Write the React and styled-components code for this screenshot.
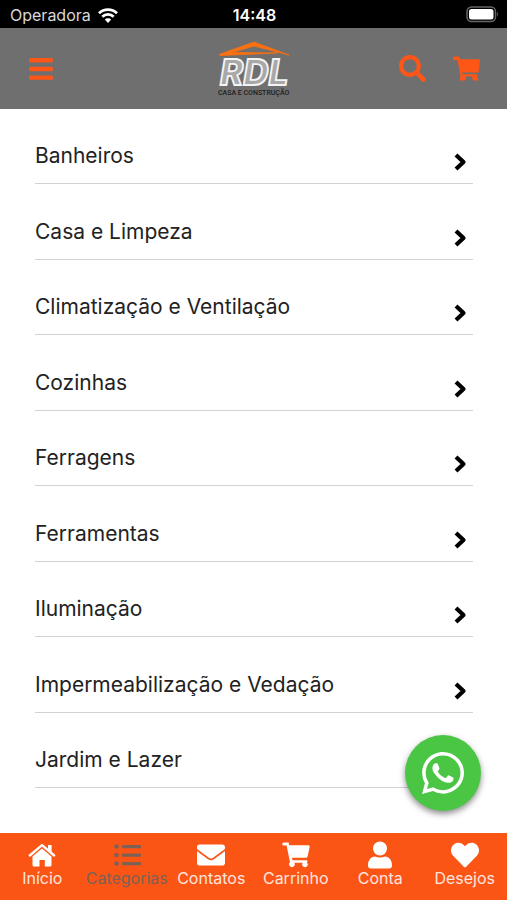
import React from 'react';
import styled, { createGlobalStyle } from 'styled-components';
import { FaEnvelope, FaHeart, FaSearch, FaWhatsapp } from 'react-icons/fa';

const GlobalStyle = createGlobalStyle`
    * {
        box-sizing: border-box;
    }

    body {
        margin: 0;
        background: #fff;
        font-family: Inter, "Liberation Sans", sans-serif;
    }
`

const Screen = styled.div`
    display: flex;
    flex-direction: column;
    height: 100vh;
`

const StatusBar = styled.div`
    display: grid;
    grid-template-columns: 1fr auto 1fr;
    align-items: center;
    flex: none;
    height: 28px;
    padding: 2px 8px 0 10px;
    background: #000;
    color: #fff;
    font-size: 16px;
    line-height: 20px;
`

const Carrier = styled.div`
    display: flex;
    align-items: center;
    gap: 7px;
    color: #d8d8d8;
`

const Clock = styled.div`
    font-weight: 600;
`

const Battery = styled.svg`
    justify-self: end;
    width: 34px;
    height: 18px;
`

const Header = styled.header`
    display: grid;
    grid-template-columns: 1fr auto 1fr;
    align-items: center;
    flex: none;
    height: 81px;
    padding: 0 25px;
    background: #6f6f6f;
`

const HeaderActions = styled.div`
    display: flex;
    justify-content: flex-end;
    gap: 22px;
`

const IconButton = styled.button`
    display: flex;
    align-items: center;
    justify-content: center;
    width: 32px;
    height: 32px;
    padding: 0;
    border: none;
    background: transparent;
    color: #fe5617;
    font-size: 27px;
    cursor: pointer;
`

const Logo = styled.a`
    display: block;
    height: 60px;
`

const CategoryList = styled.ul`
    display: flex;
    flex-direction: column;
    flex: 1;
    min-height: 0;
    margin: 0;
    padding: 0 34px 45px 35px;
    list-style: none;
    overflow-y: auto;
`

const CategoryItem = styled.li`
    display: flex;
    flex: 1 0 60px;
    border-bottom: 1px solid #d2d2d2;
`

const CategoryLink = styled.a`
    display: flex;
    align-items: flex-end;
    justify-content: space-between;
    flex: 1;
    padding: 0 6px 12px 0;
    color: #222;
    font-size: 21px;
    line-height: 30px;
    text-decoration: none;
`

const WhatsappButton = styled.a`
    position: fixed;
    right: 26px;
    bottom: 89px;
    display: flex;
    align-items: center;
    justify-content: center;
    width: 76px;
    height: 76px;
    border-radius: 50%;
    background: #4ac544;
    box-shadow: 0 3px 6px rgba(0, 0, 0, 0.45);
    color: #fff;
    font-size: 48px;
`

const TabBar = styled.nav`
    display: grid;
    grid-template-columns: repeat(6, 1fr);
    flex: none;
    height: 67px;
    padding-top: 8px;
    background: #fb5516;
`

const Tab = styled.a`
    display: flex;
    flex-direction: column;
    align-items: center;
    color: ${props => props.$active ? '#7b6255' : '#fff'};
    font-size: 16px;
    line-height: 18px;
    text-decoration: none;
    white-space: nowrap;

    svg {
        width: 28px;
        height: 28px;
    }
`

const TabLabel = styled.span`
    opacity: ${props => props.$active ? 1 : 0.85};
`

function WifiIcon() {
    return (
        <svg width="20" height="15" viewBox="0 0 20 15" fill="none" stroke="#fff" strokeWidth="2.8">
            <path d="M1 5.3a12.8 12.8 0 0 1 18 0" />
            <path d="M4.3 8.8a8.1 8.1 0 0 1 11.4 0" />
            <path d="M10 15 6.8 11.6a4.5 4.5 0 0 1 6.4 0z" fill="#fff" stroke="none" />
        </svg>
    );
}

function MenuIcon() {
    return (
        <svg width="24" height="22" viewBox="0 0 24 22" fill="currentColor">
            <rect width="24" height="4.4" rx="1.6" />
            <rect y="8.8" width="24" height="4.4" rx="1.6" />
            <rect y="17.4" width="24" height="4.4" rx="1.6" />
        </svg>
    );
}

function ChevronIcon() {
    return (
        <svg width="13" height="18" viewBox="0 0 13 18" fill="none" stroke="#000" strokeWidth="4.2" strokeLinejoin="round">
            <path d="M2 2 9.5 9 2 16" />
        </svg>
    );
}

function BasketIcon() {
    return (
        <svg width="27" height="25" viewBox="0 0 27 25" fill="currentColor">
            <path d="M0 1.5Q0 .5 1 .5H6l1 2.7H27L25.500 16.500H9.300V18.300H24V20L25.500 24.500H20L18.800 20.500H13.200L12 24.500H6.800L7.500 20 4.500 4H1Q0 4 0 3z" />
        </svg>
    );
}

function HomeIcon() {
    return (
        <svg viewBox="0 0 28 28" fill="currentColor">
            <path d="M14 7.6 23.5 15.5V24a1.500 1.500 0 0 1-1.500 1.500H16.800V19H11.500V25.500H6A1.500 1.500 0 0 1 4.500 24V15.500z" />
            <path d="M1.800 14.500 14 4.200 26.200 14.500" fill="none" stroke="currentColor" strokeWidth="2.4" strokeLinecap="round" strokeLinejoin="round" />
            <path d="M20 4h3.600v8L20 9z" />
        </svg>
    );
}

function ListIcon() {
    return (
        <svg viewBox="0 0 28 28" fill="currentColor">
            <circle cx="3.5" cy="5.5" r="2.3" />
            <circle cx="3.5" cy="14" r="2.3" />
            <circle cx="3.5" cy="22.5" r="2.3" />
            <rect x="9" y="4" width="19" height="3.2" rx="1" />
            <rect x="9" y="12.5" width="19" height="3.2" rx="1" />
            <rect x="9" y="21" width="19" height="3.2" rx="1" />
        </svg>
    );
}

function CartIcon() {
    return (
        <svg viewBox="0 0 28 28" fill="currentColor">
            <path d="M1.5 1.5H6.5L7.2 4.300H26.500Q28 4.300 27.700 5.800L25.600 15.500Q25.300 16.700 24 16.700H10l.5 2.500H24.500q1.200 0 .9 1.200l-.4 1a2.800 2.800 0 1 1-4.200.3H12.200a2.800 2.800 0 1 1-4.200-.5L4.600 4.500H1.500Q.3 4.500.3 3T1.500 1.500z" />
        </svg>
    );
}

function UserIcon() {
    return (
        <svg viewBox="0 0 28 28" fill="currentColor">
            <circle cx="14" cy="7.5" r="7" />
            <path d="M2 24.5C2 19 5 15.500 9 15.500q5 2 10 0c4 0 7 3.500 7 9q0 3-3 3H5q-3 0-3-3z" />
        </svg>
    );
}

function LogoMark() {
    return (
        <svg width="74" height="60" viewBox="0 0 74 60" role="img" aria-label="RDL Casa e Construção">
            <path d="M2 15.5 37 3 72 16 37 7 15 13.5 60 14 3 16.5z" fill="#fb7010" stroke="#fb7010" strokeWidth="0.8" />
            <text
                x="3"
                y="46"
                fill="#a8a8a8"
                stroke="#f4f4f4"
                strokeWidth="1.8"
                fontFamily="Inter, sans-serif"
                fontStyle="italic"
                fontWeight="800"
                fontSize="35"
            >
                RDL
            </text>
            <text x="1" y="56" fill="#1c1c1c" fontFamily="Roboto, sans-serif" fontWeight="500" fontSize="7">
                CASA E CONSTRUÇÃO
            </text>
        </svg>
    );
}

const categories = [
    'Banheiros',
    'Casa e Limpeza',
    'Climatização e Ventilação',
    'Cozinhas',
    'Ferragens',
    'Ferramentas',
    'Iluminação',
    'Impermeabilização e Vedação',
    'Jardim e Lazer',
];

const tabs = [
    { name: 'Início', icon: HomeIcon },
    { name: 'Categorias', icon: ListIcon, active: true },
    { name: 'Contatos', icon: FaEnvelope },
    { name: 'Carrinho', icon: CartIcon },
    { name: 'Conta', icon: UserIcon },
    { name: 'Desejos', icon: FaHeart },
];

function App() {
    return (
        <Screen>
            <GlobalStyle />
            <StatusBar>
                <Carrier>Operadora <WifiIcon /></Carrier>
                <Clock>14:48</Clock>
                <Battery viewBox="0 0 34 18">
                    <rect x="2" y="1" width="28.5" height="14.5" rx="4.5" fill="none" stroke="#666" strokeWidth="1.5" />
                    <rect x="4" y="3" width="24.5" height="10.5" rx="2.5" fill="#fff" />
                    <path d="M32 6q2 2.2 0 4.5z" fill="#666" />
                </Battery>
            </StatusBar>
            <Header>
                <IconButton type="button" aria-label="Menu"><MenuIcon /></IconButton>
                <Logo href="#inicio"><LogoMark /></Logo>
                <HeaderActions>
                    <IconButton type="button" aria-label="Buscar"><FaSearch /></IconButton>
                    <IconButton type="button" aria-label="Carrinho"><BasketIcon /></IconButton>
                </HeaderActions>
            </Header>
            <CategoryList>
                {categories.map(name => (
                    <CategoryItem key={name}>
                        <CategoryLink href="#categoria">
                            {name}
                            <ChevronIcon />
                        </CategoryLink>
                    </CategoryItem>
                ))}
            </CategoryList>
            <WhatsappButton href="#whatsapp" aria-label="WhatsApp"><FaWhatsapp /></WhatsappButton>
            <TabBar>
                {tabs.map(({ name, icon: Icon, active }) => (
                    <Tab key={name} href="#aba" $active={active}>
                        <Icon />
                        <TabLabel $active={active}>{name}</TabLabel>
                    </Tab>
                ))}
            </TabBar>
        </Screen>
    );
}

export default App;
